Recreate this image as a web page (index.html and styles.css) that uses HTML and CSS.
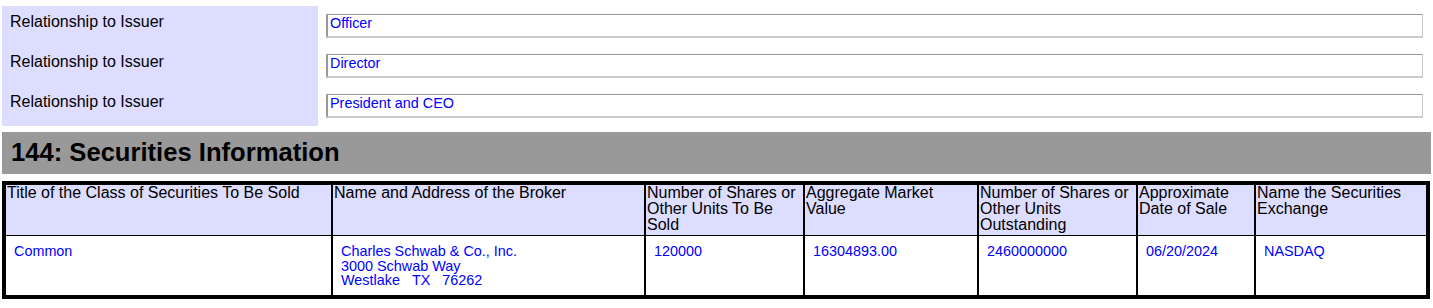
FILE: index.html
```html
<!DOCTYPE html>
<html>
<head>
<meta charset="utf-8">
<title>144: Securities Information</title>
<link rel="stylesheet" href="styles.css">
</head>
<body>
<div class="page">
  <div class="rel-section">
    <div class="rel-row">
      <div class="rel-label">Relationship to Issuer</div>
      <div class="rel-value"><div class="field">Officer</div></div>
    </div>
    <div class="rel-row">
      <div class="rel-label">Relationship to Issuer</div>
      <div class="rel-value"><div class="field">Director</div></div>
    </div>
    <div class="rel-row">
      <div class="rel-label">Relationship to Issuer</div>
      <div class="rel-value"><div class="field">President and CEO</div></div>
    </div>
  </div>

  <h2 class="section-title">144: Securities Information</h2>

  <table class="sec-table">
    <thead>
      <tr>
        <th class="c1">Title of the Class of Securities To Be Sold</th>
        <th class="c2">Name and Address of the Broker</th>
        <th class="c3">Number of Shares or Other Units To Be Sold</th>
        <th class="c4">Aggregate Market Value</th>
        <th class="c5">Number of Shares or Other Units Outstanding</th>
        <th class="c6">Approximate Date of Sale</th>
        <th class="c7">Name the Securities Exchange</th>
      </tr>
    </thead>
    <tbody>
      <tr>
        <td>Common</td>
        <td>Charles Schwab &amp; Co., Inc.<br>3000 Schwab Way<br>Westlake&nbsp;&nbsp;&nbsp;TX&nbsp;&nbsp;&nbsp;76262</td>
        <td>120000</td>
        <td>16304893.00</td>
        <td>2460000000</td>
        <td>06/20/2024</td>
        <td>NASDAQ</td>
      </tr>
    </tbody>
  </table>
</div>
</body>
</html>
```

FILE: styles.css
```css
html, body {
  margin: 0;
  padding: 0;
  background: #ffffff;
}

body {
  font-family: "Liberation Sans", Arial, sans-serif;
  color: #000000;
}

.page {
  padding: 6px 2px 0 2px;
  width: 1429px;
}

.rel-section {
  display: flex;
  flex-direction: column;
}

.rel-row {
  display: flex;
  height: 40px;
}

.rel-label {
  width: 316px;
  flex: none;
  box-sizing: border-box;
  background: #ddddff;
  padding: 7px 0 0 8px;
  font-size: 16px;
  line-height: 18px;
}

.rel-value {
  flex: 1;
  padding: 8px 8px 0 8px;
}

.field {
  box-sizing: border-box;
  height: 24px;
  border-style: solid;
  border-width: 1px 1px 2px 2px;
  border-color: #999999 #cccccc #cccccc #999999;
  padding: 1px 0 0 2px;
  color: #0000ff;
  font-size: 14.4px;
  line-height: 15px;
}

.section-title {
  margin: 6px 0 0 0;
  height: 42px;
  box-sizing: border-box;
  background: #999999;
  padding: 6px 0 0 9px;
  font-size: 25.6px;
  line-height: 28px;
  font-weight: bold;
}

.sec-table {
  margin-top: 7px;
  width: 1428px;
  table-layout: fixed;
  border-collapse: separate;
  border-spacing: 0;
  border: 3px solid #000000;
}

.sec-table th {
  box-sizing: border-box;
  background: #ddddff;
  border: 1px solid #000000;
  padding: 0 1px 2px 1px;
  font-size: 16px;
  line-height: 16px;
  font-weight: normal;
  text-align: left;
  vertical-align: top;
}

.sec-table td {
  border: 1px solid #000000;
  border-top: 0;
  padding: 8px 4px 7px 8px;
  color: #0000ff;
  font-size: 14.4px;
  line-height: 14.5px;
  vertical-align: top;
}

.c1 { width: 327px; }
.c2 { width: 313px; }
.c3 { width: 159px; }
.c4 { width: 174px; }
.c5 { width: 159px; }
.c6 { width: 118px; }
.c7 { width: 172px; }
```
